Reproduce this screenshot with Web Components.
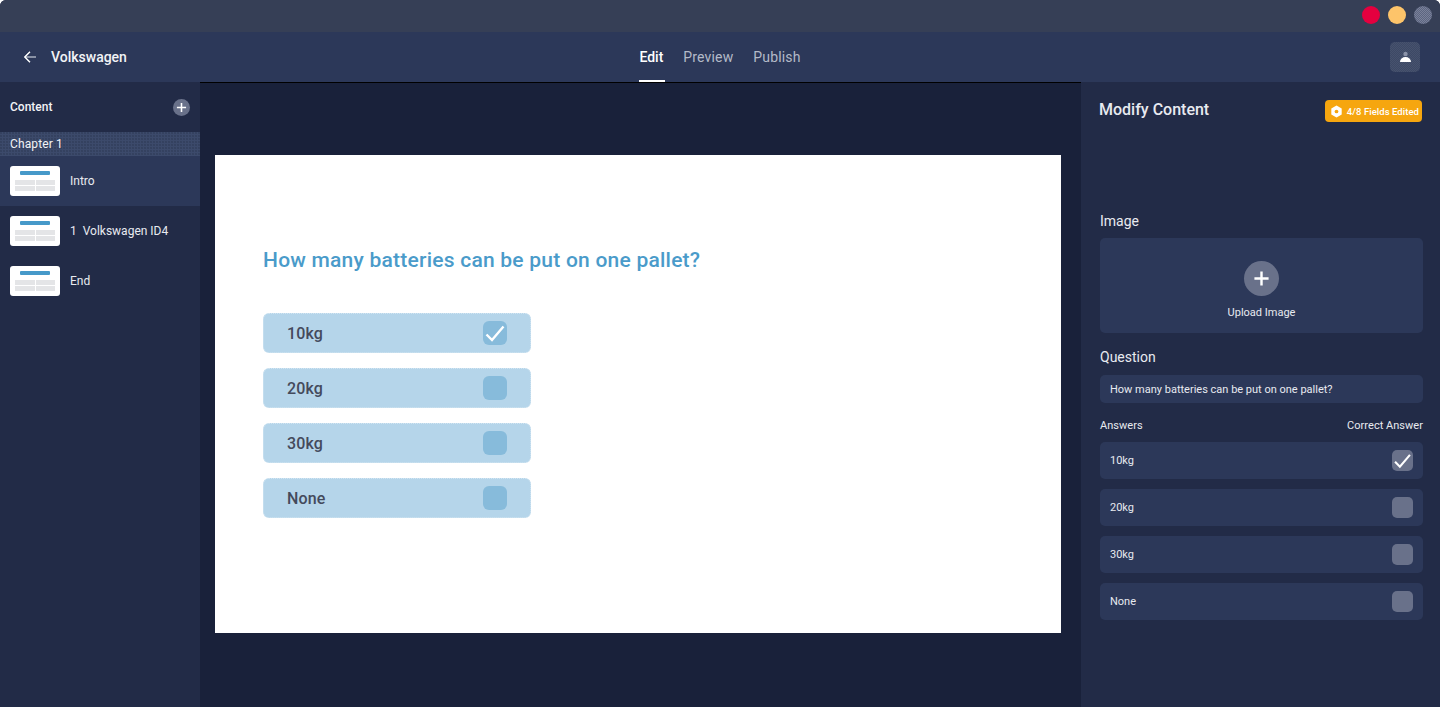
<!DOCTYPE html>
<html lang="en">
<head>
<meta charset="utf-8">
<title>Volkswagen - Edit</title>
<style>
  html, body { margin: 0; height: 100%; background: #fff; }
  body { font-family: Roboto, "Liberation Sans", sans-serif; overflow: hidden; }
</style>
</head>
<body>
<app-shell>
  <window-bar slot="window"></window-bar>
  <top-bar slot="top" title="Volkswagen"></top-bar>

  <side-nav slot="left">
    <nav-item selected>Intro</nav-item>
    <nav-item>1&nbsp; Volkswagen ID4</nav-item>
    <nav-item>End</nav-item>
  </side-nav>

  <quiz-slide slot="main" question="How many batteries can be put on one pallet?">
    <quiz-option checked>10kg</quiz-option>
    <quiz-option>20kg</quiz-option>
    <quiz-option>30kg</quiz-option>
    <quiz-option>None</quiz-option>
  </quiz-slide>

  <edit-panel slot="right" question="How many batteries can be put on one pallet?">
    <answer-row checked>10kg</answer-row>
    <answer-row>20kg</answer-row>
    <answer-row>30kg</answer-row>
    <answer-row>None</answer-row>
  </edit-panel>
</app-shell>

<script>
// Shared icons.
const CHECK = '<svg viewBox="0 0 24 24" width="100%" height="100%" fill="none" stroke="#fff" stroke-width="2.4"><path d="M3.500 13.500l5.500 5.500L20.500 5.500"/></svg>'
const PLUS = '<svg viewBox="0 0 24 24" width="100%" height="100%" fill="none" stroke="#fff" stroke-width="3.400"><path d="M12 2v20M2 12h20"/></svg>'

/**
 * Small helper so every element gets an open shadow root from its markup.
 */
class ShadowElement extends HTMLElement {
  render (html) {
    if (!this.shadowRoot) this.attachShadow({ mode: 'open' })
    this.shadowRoot.innerHTML = html
  }
}

customElements.define('app-shell', class extends ShadowElement {
  connectedCallback () {
    this.render(`
      <style>
        :host { display: flex; flex-direction: column; height: 707px; background: #19213a; border-radius: 6px 6px 0 0; overflow: hidden; }
        .body { flex: 1; display: flex; min-height: 0; }
        ::slotted([slot=main]) { flex: 1; min-width: 0; }
      </style>
      <slot name="window"></slot>
      <slot name="top"></slot>
      <div class="body">
        <slot name="left"></slot>
        <slot name="main"></slot>
        <slot name="right"></slot>
      </div>
    `)
  }
})

customElements.define('window-bar', class extends ShadowElement {
  connectedCallback () {
    this.render(`
      <style>
        :host { display: flex; justify-content: flex-end; align-items: center; gap: 8px; height: 32px; padding: 0 8px 2px 0; box-sizing: border-box; background: #363f56; }
        i { display: block; width: 18px; height: 18px; border-radius: 50%; }
        .red { background: #e4003f; }
        .yellow { background: #fdc46a; }
        .grey { background: repeating-conic-gradient(#5c6580 0 25%, #7a819a 0 50%) 0 0 / 2px 2px; }
      </style>
      <i class="red"></i><i class="yellow"></i><i class="grey"></i>
    `)
  }
})

customElements.define('top-bar', class extends ShadowElement {
  connectedCallback () {
    this.render(`
      <style>
        :host { display: grid; grid-template-columns: 1fr auto 1fr; align-items: center; height: 50px; background: #2c3859; color: #f2f3f6; font-size: 14px; font-weight: 500; }
        .back { display: flex; align-items: center; gap: 15px; padding-left: 24px; }
        .back svg { width: 12px; height: 12px; }
        nav { display: flex; gap: 18px; height: 100%; }
        nav span { display: flex; align-items: center; color: #b4bac8; font-weight: 400; letter-spacing: .15px; border-bottom: 2px solid transparent; box-sizing: border-box; padding: 2px 0 0; }
        nav .on { color: #fff; font-weight: 500; letter-spacing: 0; border-bottom-color: #fff; padding-right: 2px; }
        nav span:last-child { margin-left: 2px; }
        .user { justify-self: end; display: flex; align-items: center; justify-content: center; width: 30px; height: 30px; margin-right: 20px; border-radius: 5px; background: repeating-conic-gradient(#3d4965 0 25%, #47526e 0 50%) 0 0 / 2px 2px; }
        .user svg { width: 14px; height: 14px; }
      </style>
      <div class="back">
        <svg viewBox="0 0 12 12" fill="none" stroke-width="1.400"><path d="M1.500 6H12" stroke="#a9afbf"/><path d="M6 .800L.800 6 6 11.200" stroke="#fff"/></svg>
        <span>${this.getAttribute('title')}</span>
      </div>
      <nav><span class="on">Edit</span><span>Preview</span><span>Publish</span></nav>
      <div class="user">
        <svg viewBox="0 0 14 14"><circle cx="7.500" cy="4" r="2.200" fill="#8a92a8"/><path d="M2 12a5.500 5 0 0 1 11 0z" fill="#fff"/></svg>
      </div>
    `)
  }
})

customElements.define('side-nav', class extends ShadowElement {
  connectedCallback () {
    this.render(`
      <style>
        :host { display: block; width: 200px; flex: none; background: #222b47; color: #f2f3f6; font-size: 12px; }
        header { display: flex; justify-content: space-between; align-items: center; height: 50px; padding: 0 10px; font-weight: 500; }
        header i { display: block; width: 17px; height: 17px; padding: 3px; box-sizing: border-box; border-radius: 50%; background: #69718a; }
        .chapter {
          height: 24px; line-height: 24px; padding-left: 10px; letter-spacing: .12px;
          background: radial-gradient(circle at 1px 1px, #34415f 0 .7px, #3c4a6b .8px) 0 0 / 3px 3px;
        }
      </style>
      <header><span>Content</span><i>${PLUS}</i></header>
      <div class="chapter">Chapter 1</div>
      <slot></slot>
    `)
  }
})

customElements.define('nav-item', class extends ShadowElement {
  connectedCallback () {
    this.render(`
      <style>
        :host { display: flex; align-items: center; gap: 10px; height: 50px; padding-left: 10px; color: #e8eaf0; font-size: 12px; }
        :host([selected]) { background: #2c3859; }
        .thumb { display: flex; flex-direction: column; gap: 1px; width: 50px; height: 30px; padding: 5px; box-sizing: border-box; border-radius: 3px; background: #fff; }
        .bar { height: 4px; margin: 0 5px 4px; border-radius: 1px; background: #4699c9; }
        .cells { display: grid; grid-template-columns: 1fr 1fr; gap: 1px; }
        .cells b { height: 5px; background: #e4e5e7; }
      </style>
      <div class="thumb">
        <div class="bar"></div>
        <div class="cells"><b></b><b></b><b></b><b></b></div>
      </div>
      <span><slot></slot></span>
    `)
  }
})

customElements.define('quiz-slide', class extends ShadowElement {
  connectedCallback () {
    this.render(`
      <style>
        :host { display: block; padding: 72px 20px 0 15px; border-top: 1px solid #000; box-sizing: border-box; }
        .slide { height: 478px; padding: 91px 48px 0; box-sizing: border-box; background: #fff; }
        h1 { margin: 0 0 39px; font-size: 21px; line-height: 28px; font-weight: 500; letter-spacing: .23px; color: #4a9bca; }
        .options { display: flex; flex-direction: column; gap: 15px; width: 268px; }
      </style>
      <div class="slide">
        <h1>${this.getAttribute('question')}</h1>
        <div class="options"><slot></slot></div>
      </div>
    `)
  }
})

customElements.define('quiz-option', class extends ShadowElement {
  connectedCallback () {
    this.render(`
      <style>
        :host { display: flex; justify-content: space-between; align-items: center; height: 40px; padding: 0 23px; box-sizing: border-box; border: 1px dotted #d2e5f2; border-radius: 6px; background: #b5d5ea; color: #444a5c; font-size: 16px; font-weight: 500; letter-spacing: .15px; }
        i { display: block; width: 24px; height: 24px; border-radius: 6px; background: #87bbdb; }
      </style>
      <span><slot></slot></span>
      <i>${this.hasAttribute('checked') ? CHECK : ''}</i>
    `)
  }
})

customElements.define('edit-panel', class extends ShadowElement {
  connectedCallback () {
    this.render(`
      <style>
        :host { display: block; width: 359px; flex: none; padding: 0 17px 0 19px; box-sizing: border-box; background: #222b47; color: #f2f3f6; font-size: 11px; }
        header { display: flex; justify-content: space-between; align-items: flex-start; height: 56px; padding: 18px 1px 0 0; box-sizing: border-box; }
        h2 { margin: 0 0 0 -1px; font-size: 16px; line-height: 20px; font-weight: 500; color: #e8eaf0; }
        .badge { display: flex; align-items: center; gap: 4px; height: 22px; padding: 0 3px 0 5px; border-radius: 4px; background: #f6a60f; color: #fff; font-size: 9.500px; font-weight: 500; letter-spacing: .05px; white-space: nowrap; }
        .badge svg { width: 13px; height: 13px; }
        h3 { margin: 0; font-size: 14px; line-height: 18px; font-weight: 400; color: #e8eaf0; }
        .image-title { margin-top: 74px; }
        .upload { display: flex; flex-direction: column; align-items: center; height: 95px; margin-top: 8px; padding-top: 23px; box-sizing: border-box; border-radius: 5px; background: #2c3859; color: #e8eaf0; }
        .upload i { display: block; width: 35px; height: 35px; padding: 9px; box-sizing: border-box; border-radius: 50%; background: #69718a; }
        .upload span { margin-top: 10px; }
        .question-title { margin-top: 15px; }
        .question { height: 28px; line-height: 29px; margin-top: 9px; padding-left: 10px; border-radius: 5px; background: #2c3859; color: #e8eaf0; }
        .labels { display: flex; justify-content: space-between; margin-top: 16px; line-height: 14px; color: #e8eaf0; letter-spacing: .03px; }
        .answers { display: flex; flex-direction: column; gap: 10px; margin-top: 9px; }
      </style>
      <header>
        <h2>Modify Content</h2>
        <div class="badge">
          <svg viewBox="0 0 14 14"><path d="M7 .500l5.600 3.200v6.600L7 13.500l-5.600-3.200V3.700z" fill="#fff"/><circle cx="7" cy="7" r="2" fill="#f6a60f"/></svg>
          4/8 Fields Edited
        </div>
      </header>
      <h3 class="image-title">Image</h3>
      <div class="upload"><i>${PLUS}</i><span>Upload Image</span></div>
      <h3 class="question-title">Question</h3>
      <div class="question">${this.getAttribute('question')}</div>
      <div class="labels"><span>Answers</span><span>Correct Answer</span></div>
      <div class="answers"><slot></slot></div>
    `)
  }
})

customElements.define('answer-row', class extends ShadowElement {
  connectedCallback () {
    this.render(`
      <style>
        :host { display: flex; justify-content: space-between; align-items: center; height: 37px; padding: 0 10px; box-sizing: border-box; border-radius: 5px; background: #2c3859; color: #e8eaf0; font-size: 11px; }
        i { display: block; width: 21px; height: 21px; border-radius: 5px; background: #69718a; }
      </style>
      <span><slot></slot></span>
      <i>${this.hasAttribute('checked') ? CHECK : ''}</i>
    `)
  }
})
</script>
</body>
</html>
